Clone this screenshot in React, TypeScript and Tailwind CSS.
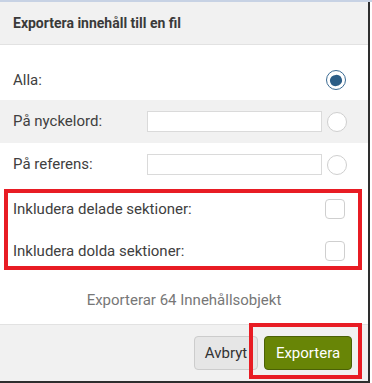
import React from "react";

const font = { fontFamily: "Roboto, 'Open Sans', sans-serif" };

function Radio({ checked }: { checked?: boolean }) {
  return checked ? (
    <div className="w-[20px] h-[20px] rounded-full border-[1.5px] border-[#3b6b93] bg-white flex items-center justify-center">
      <div className="w-[12px] h-[11px] rounded-[45%] bg-[#2b5d86] rotate-[-20deg]" />
    </div>
  ) : (
    <div className="w-[20px] h-[20px] rounded-full border border-[#cfcfcf] bg-white" />
  );
}

function Row({ label, children, gray, extra }: { label: string; children: React.ReactNode; gray?: boolean; extra?: string }) {
  return (
    <div className={`h-[43px] flex items-center pl-[13px] pr-[21px] ${gray ? "bg-[#f1f1f1]" : "bg-white"} ${extra ?? ""}`}>
      <div className="text-[15px] text-[#404040] flex-1">{label}</div>
      {children}
    </div>
  );
}

export default function App() {
  return (
    <div className="w-[372px] h-[383px] bg-white relative overflow-hidden" style={font}>
      <div className="h-[2px] bg-[#c7d2e4]" />
      <div className="w-[370px] h-[381px] border-r-[2px] border-b-[2px] border-[#2e2e2e] flex flex-col">
        <div className="h-[43px] bg-[#f1f1f1] border-b border-[#e2e2e2] flex items-center pl-[13px] pt-[1px]">
          <span className="text-[14px] font-bold text-[#3a3a3a]">Exportera innehåll till en fil</span>
        </div>
        <div className="pt-[12px] flex flex-col">
          <Row label="Alla:" extra="pt-[3px]">
            <div className="mr-[1px]">
              <Radio checked />
            </div>
          </Row>
          <Row label="På nyckelord:" gray>
            <div className="w-[175px] h-[21px] border border-[#dadada] bg-white mr-[5px]" />
            <Radio />
          </Row>
          <Row label="På referens:">
            <div className="w-[175px] h-[21px] border border-[#dadada] bg-white mr-[5px]" />
            <Radio />
          </Row>
          <div className="h-[2px]" />
          <div className="h-[42px] flex items-center pl-[13px] pr-[23px]">
            <div className="text-[15px] text-[#404040] flex-1">Inkludera delade sektioner:</div>
            <div className="w-[20px] h-[20px] rounded-[4px] border border-[#cfcfcf] bg-white" />
          </div>
          <div className="h-[42px] flex items-center pl-[13px] pr-[23px]">
            <div className="text-[15px] text-[#404040] flex-1">Inkludera dolda sektioner:</div>
            <div className="w-[20px] h-[20px] rounded-[4px] border border-[#cfcfcf] bg-white" />
          </div>
          <div className="h-[52px] flex items-center justify-center pt-[4px] text-[15px] text-[#777777]">
            Exporterar 64 Innehållsobjekt
          </div>
        </div>
        <div className="flex-1 bg-[#f1f1f1] border-t border-[#e2e2e2] flex items-start justify-end pt-[11px] pr-[16px] gap-[6px]">
          <button className="h-[34px] w-[64px] rounded-[4px] border border-[#cccccc] bg-[#e6e6e6] text-[15px] text-[#333]">
            Avbryt
          </button>
          <button className="h-[34px] w-[88px] rounded-[4px] border border-[#4b6106] bg-[#688506] text-[15px] text-white">
            Exportera
          </button>
        </div>
      </div>
      <div className="absolute left-[4px] top-[189px] w-[358px] h-[81px] border-[4px] border-[#e81c24]" />
      <div className="absolute left-[249px] top-[323px] w-[113px] h-[56px] border-[4px] border-[#e81c24]" />
    </div>
  );
}
